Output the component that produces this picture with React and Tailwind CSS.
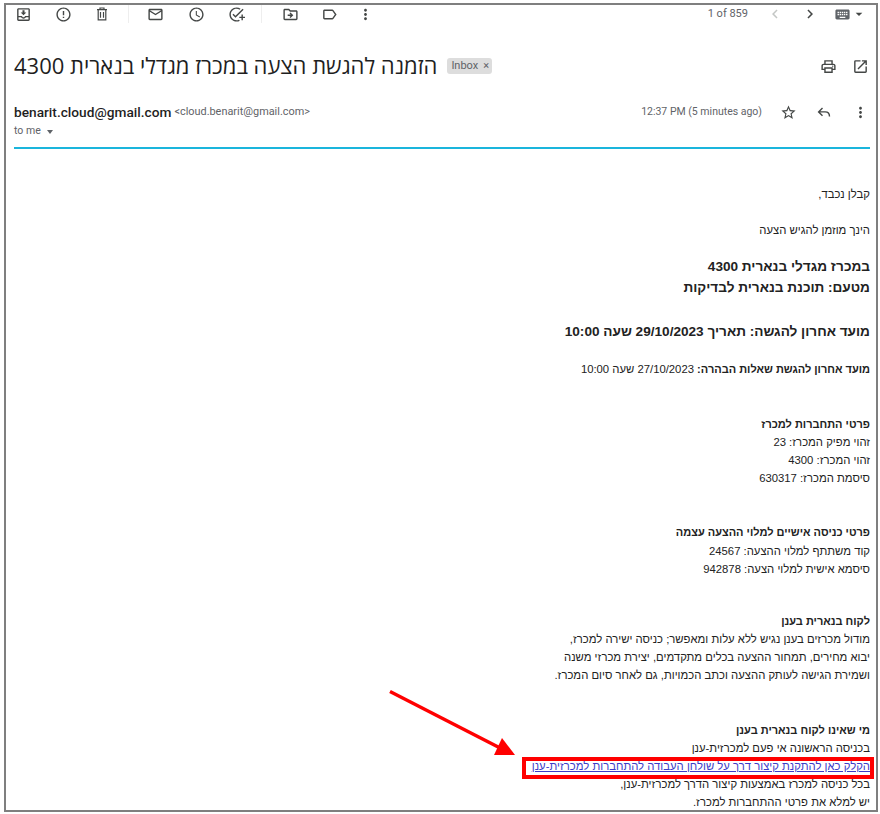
import {
	MdOutlineMoveToInbox,
	MdErrorOutline,
	MdOutlineEmail,
	MdOutlineWatchLater,
	MdOutlineAddTask,
	MdOutlineDriveFileMove,
	MdOutlineLabel,
	MdMoreVert,
	MdChevronLeft,
	MdChevronRight,
	MdKeyboard,
	MdArrowDropDown,
	MdOutlinePrint,
	MdOpenInNew,
	MdStarBorder,
} from "react-icons/md"

const ToolIcon = ({ icon: Icon, className = "" }) => (
	<div className={`flex w-[16px] justify-center text-[#444746] ${className}`}>
		<Icon size={17} className="shrink-0" />
	</div>
)

const TrashIcon = () => (
	<svg width="16" height="16" viewBox="0 0 16 16" fill="none" stroke="currentColor" strokeWidth="1.2">
		<path d="M3 3.6h10M6 3.4V2h4v1.4M4.2 3.6v10.3h7.6V3.6M6.5 6v5.8M9.5 6v5.8" />
	</svg>
)

const ReplyIcon = () => (
	<svg width="17" height="17" viewBox="0 0 17 17" fill="none" stroke="#444746" strokeWidth="1.4">
		<path d="M6.5 4 2.6 7.9l3.9 3.9M2.8 7.9h6.4c2.6 0 4.3 1.700 4.3 4.600" />
	</svg>
)

const Line = ({ bold, big, className = "", children }) => (
	<p
		className={`${big ? "h-[21px] text-[13.6px] leading-[21px]" : "h-[18.2px] leading-[18.2px]"} ${bold ? "font-bold" : ""} ${bold && !big ? "text-[11px]" : ""} ${className}`}
	>
		{children}
	</p>
)

const App = () => {
	return (
		<div className="relative h-[814px] w-[880px] overflow-hidden bg-white font-['Liberation_Sans',sans-serif]">
			<div className="ml-[4px] mt-[3px] h-[809px] w-[874px] overflow-hidden border-2 border-[#7f7f7f] pl-[8px] pr-[6px]">
				{/* TOOLBAR */}
				<div className="flex h-[18px] items-center pl-[1px]">
					<ToolIcon icon={MdOutlineMoveToInbox} />
					<ToolIcon icon={MdErrorOutline} className="ml-[24px]" />
					<div className="ml-[23px] flex w-[16px] justify-center text-[#444746]">
						<TrashIcon />
					</div>
					<div className="ml-[18px] h-[18px] w-px bg-[#eeeeee]" />
					<ToolIcon icon={MdOutlineEmail} className="ml-[18px]" />
					<ToolIcon icon={MdOutlineWatchLater} className="ml-[25px]" />
					<ToolIcon icon={MdOutlineAddTask} className="ml-[24px]" />
					<div className="ml-[17px] h-[18px] w-px bg-[#eeeeee]" />
					<ToolIcon icon={MdOutlineDriveFileMove} className="ml-[20px]" />
					<ToolIcon icon={MdOutlineLabel} className="ml-[23px]" />
					<ToolIcon icon={MdMoreVert} className="ml-[20px]" />

					<span className="ml-auto font-['Roboto',sans-serif] text-[11px] text-[#5f6368]">1 of 859</span>
					<MdChevronLeft size={18} className="ml-[18px] text-[#c4c7c5]" />
					<MdChevronRight size={18} className="ml-[17px] text-[#444746]" />
					<MdKeyboard size={17} className="ml-[15px] text-[#5f6368]" />
					<MdArrowDropDown size={16} className="mr-[3px] text-[#444746]" />
				</div>

				{/* SUBJECT */}
				<div className="mt-[25px] flex h-[36px] items-center">
					<h1 dir="rtl" className="-mt-[2px] font-['Open_Sans',sans-serif] text-[22px] font-normal text-[#1f1f1f]">
						הזמנה להגשת הצעה במכרז מגדלי בנארית 4300
					</h1>
					<div className="ml-[10px] flex h-[16px] items-center rounded-[3px] bg-[#dddddd] pl-[4px] pr-[3px] font-['Roboto',sans-serif] text-[11px] text-[#5f6368]">
						Inbox <span className="ml-[5px] text-[11px]">×</span>
					</div>
					<MdOutlinePrint size={17} className="ml-auto text-[#444746]" />
					<MdOpenInNew size={17} className="ml-[15px] mr-[1px] text-[#444746]" />
				</div>

				{/* SENDER */}
				<div className="mt-[19px] flex h-[18px] items-center font-['Roboto',sans-serif]">
					<span className="text-[13.7px] font-medium text-[#1f1f1f]">benarit.cloud@gmail.com</span>
					<span className="ml-[3px] text-[10.9px] text-[#5f6368]">&lt;cloud.benarit@gmail.com&gt;</span>
					<span className="ml-auto text-[10.5px] text-[#5f6368]">12:37 PM (5 minutes ago)</span>
					<MdStarBorder size={17} className="ml-[18px] text-[#444746]" />
					<div className="ml-[19px]">
						<ReplyIcon />
					</div>
					<MdMoreVert size={17} className="ml-[19px] mr-[1px] text-[#444746]" />
				</div>
				<div className="mt-[2px] flex h-[16px] items-center font-['Roboto',sans-serif] text-[10.5px] text-[#5f6368]">
					to me
					<span className="ml-[6px] mt-[2px] border-x-[3.5px] border-t-[4px] border-x-transparent border-t-[#5f6368]" />
				</div>

				{/* CONTENT */}
				<div dir="rtl" className="mt-[8px] border-t-2 border-[#1ab5dc] pt-[36px] text-[11.3px] text-[#222222]">
					<Line>קבלן נכבד,</Line>
					<Line className="mt-[18px]">הינך מוזמן להגיש הצעה</Line>

					<Line bold big className="mt-[17px]">במכרז מגדלי בנארית 4300</Line>
					<Line bold big>מטעם: תוכנת בנארית לבדיקות</Line>

					<Line bold big className="mt-[23px]">מועד אחרון להגשה: תאריך 29/10/2023 שעה 10:00</Line>

					<Line className="mt-[18px]"><b className="text-[11px]">מועד אחרון להגשת שאלות הבהרה:</b> 27/10/2023 שעה 10:00</Line>

					<Line bold className="mt-[36px]">פרטי התחברות למכרז</Line>
					<Line>זהוי מפיק המכרז: 23</Line>
					<Line>זהוי המכרז: 4300</Line>
					<Line>סיסמת המכרז: 630317</Line>

					<Line bold className="mt-[36px]">פרטי כניסה אישיים למלוי ההצעה עצמה</Line>
					<Line>קוד משתתף למלוי ההצעה: 24567</Line>
					<Line>סיסמא אישית למלוי הצעה: 942878</Line>

					<Line bold className="mt-[34px]">לקוח בנארית בענן</Line>
					<Line>מודול מכרזים בענן נגיש ללא עלות ומאפשר; כניסה ישירה למכרז,</Line>
					<Line>יבוא מחירים, תמחור ההצעה בכלים מתקדמים, יצירת מכרזי משנה</Line>
					<Line>ושמירת הגישה לעותק ההצעה וכתב הכמויות, גם לאחר סיום המכרז.</Line>

					<Line bold className="mt-[36px]">מי שאינו לקוח בנארית בענן</Line>
					<Line>בכניסה הראשונה אי פעם למכרזית-ענן</Line>
					<Line>
						<a href="#" className="text-[#3c3cc8] underline">הקלק כאן להתקנת קיצור דרך על שולחן העבודה להתחברות למכרזית-ענן</a>
					</Line>
					<Line>בכל כניסה למכרז באמצעות קיצור הדרך למכרזית-ענן,</Line>
					<Line>יש למלא את פרטי ההתחברות למכרז.</Line>
				</div>
			</div>

			{/* ANNOTATION */}
			<svg className="absolute left-[385px] top-[685px]" width="135" height="75" viewBox="385 685 135 75">
				<line x1="390" y1="691.5" x2="504" y2="750" stroke="#ff0000" strokeWidth="3.5" />
				<polygon points="515,755 502,738 494,755" fill="#ff0000" />
			</svg>
			<div className="absolute left-[522px] top-[757px] h-[22px] w-[352px] border-4 border-[#ff0000]" />
		</div>
	)
}

export default App
